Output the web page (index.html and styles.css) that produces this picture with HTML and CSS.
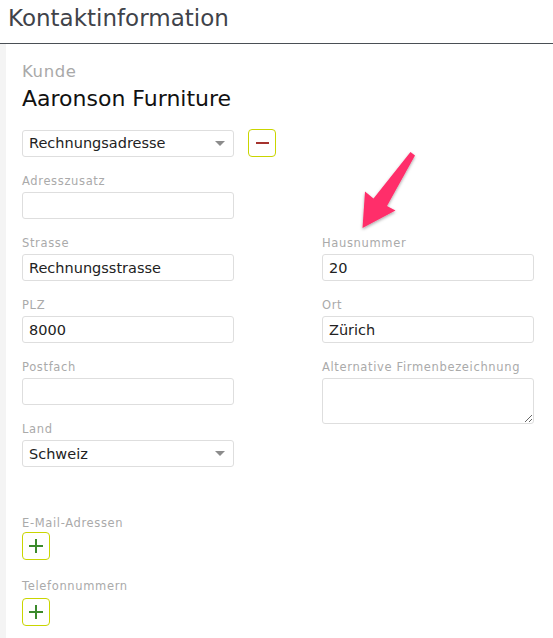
FILE: index.html
```html
<!DOCTYPE html>
<html lang="de">
<head>
<meta charset="utf-8">
<title>Kontaktinformation</title>
<link rel="stylesheet" href="styles.css">
</head>
<body>
<header class="page-title">Kontaktinformation</header>
<main class="panel">
  <div class="kunde-label">Kunde</div>
  <div class="kunde-name">Aaronson Furniture</div>

  <div class="addr-row">
    <div class="select"><span>Rechnungsadresse</span><i class="caret"></i></div>
    <button class="icon-btn" type="button" aria-label="Entfernen"><span class="minus"></span></button>
  </div>

  <div class="grid">
    <div class="field c1 r1"><label>Adresszusatz</label><div class="input"></div></div>
    <div class="field c1 r2"><label>Strasse</label><div class="input">Rechnungsstrasse</div></div>
    <div class="field c2 r2"><label>Hausnummer</label><div class="input">20</div></div>
    <div class="field c1 r3"><label>PLZ</label><div class="input">8000</div></div>
    <div class="field c2 r3"><label>Ort</label><div class="input">Zürich</div></div>
    <div class="field c1 r4"><label>Postfach</label><div class="input"></div></div>
    <div class="field c2 r4 tall"><label>Alternative Firmenbezeichnung</label><textarea class="textarea"></textarea></div>
    <div class="field c1 r5"><label>Land</label><div class="select"><span>Schweiz</span><i class="caret"></i></div></div>
  </div>

  <div class="list-block email">
    <label>E-Mail-Adressen</label>
    <button class="icon-btn" type="button" aria-label="Hinzufügen"><span class="plus"></span></button>
  </div>
  <div class="list-block phone">
    <label>Telefonnummern</label>
    <button class="icon-btn" type="button" aria-label="Hinzufügen"><span class="plus"></span></button>
  </div>
</main>
<svg class="arrow" width="553" height="638" viewBox="0 0 553 638" aria-hidden="true">
  <defs>
    <filter id="sh" x="-30%" y="-30%" width="160%" height="160%">
      <feDropShadow dx="0" dy="1.5" stdDeviation="1.5" flood-color="#000" flood-opacity="0.35"/>
    </filter>
  </defs>
  <polygon filter="url(#sh)" fill="#ff2e6a" points="410.5,152 415,155.5 387,206 395.5,210.5 362.5,228 365,191.5 373.5,198.5"/>
</svg>
</body>
</html>
```
FILE: styles.css
```css
html, body {
  margin: 0;
  padding: 0;
  background: #ffffff;
}
body {
  font-family: "DejaVu Sans", "Noto Sans", sans-serif;
  color: #222;
  width: 553px;
  height: 638px;
  overflow: hidden;
  position: relative;
}
.page-title {
  height: 44px;
  box-sizing: border-box;
  padding: 3px 0 0 8px;
  font-size: 23px;
  line-height: 30px;
  color: #3f434a;
  border-bottom: 1px solid #4a4f55;
}
.panel {
  border-left: 6px solid #f4f4f4;
  padding: 18px 0 0 16px;
  height: 600px;
  box-sizing: border-box;
}
.kunde-label {
  font-size: 16.5px;
  line-height: 20px;
  letter-spacing: 0.6px;
  color: #a9a9a9;
}
.kunde-name {
  margin-top: 4px;
  font-size: 22px;
  line-height: 26px;
  color: #111;
}
.addr-row {
  margin-top: 17px;
  display: flex;
  align-items: center;
  gap: 14px;
}
.select, .input {
  box-sizing: border-box;
  width: 212px;
  height: 27px;
  border: 1px solid #dedede;
  border-radius: 3px;
  padding: 0 6px;
  font-size: 14.5px;
  line-height: 26px;
  color: #222;
  background: #fff;
  position: relative;
}
.select {
  display: flex;
  align-items: center;
  justify-content: space-between;
}
.caret {
  width: 0;
  height: 0;
  border-left: 5px solid transparent;
  border-right: 5px solid transparent;
  border-top: 5px solid #8c8c8c;
  margin-right: 2px;
}
.icon-btn {
  box-sizing: border-box;
  width: 28px;
  height: 28px;
  border: 1px solid #c9d500;
  border-radius: 4px;
  background: #fff;
  padding: 0;
  display: flex;
  align-items: center;
  justify-content: center;
  position: relative;
}
.minus {
  width: 13px;
  height: 2px;
  background: #a5322e;
}
.plus {
  width: 14px;
  height: 14px;
  position: relative;
}
.plus::before, .plus::after {
  content: "";
  position: absolute;
  background: #3b8a2c;
}
.plus::before {
  left: 0;
  right: 0;
  top: 6.25px;
  height: 1.5px;
}
.plus::after {
  top: 0;
  bottom: 0;
  left: 6.25px;
  width: 1.5px;
}
.grid {
  margin-top: 15px;
  display: grid;
  grid-template-columns: 212px 212px;
  grid-template-rows: repeat(5, 47px);
  column-gap: 88px;
  row-gap: 15px;
}
.field label, .list-block label {
  display: block;
  font-size: 11.5px;
  line-height: 18px;
  margin-bottom: 2px;
  color: #aaaaaa;
  letter-spacing: 0.65px;
}
.c1 { grid-column: 1; }
.c2 { grid-column: 2; }
.r1 { grid-row: 1; }
.r2 { grid-row: 2; }
.r3 { grid-row: 3; }
.r4 { grid-row: 4; }
.r5 { grid-row: 5; }
.tall { grid-row: 4 / span 2; }
.textarea {
  display: block;
  box-sizing: border-box;
  width: 212px;
  height: 46px;
  margin: 1px 0 0;
  border: 1px solid #dedede;
  border-radius: 3px;
  resize: vertical;
  font-family: inherit;
}
.list-block {
  display: flex;
  flex-direction: column;
  align-items: flex-start;
}
.email {
  margin-top: 47px;
}
.email label {
  margin-bottom: 0;
}
.phone {
  margin-top: 17px;
}
.phone label {
  margin-bottom: 3px;
}
.arrow {
  position: absolute;
  left: 0;
  top: 0;
  pointer-events: none;
}
```
